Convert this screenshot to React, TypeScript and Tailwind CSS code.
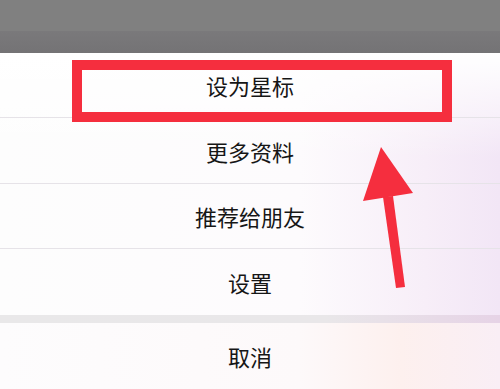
import React from "react";

const font = { fontFamily: '"Noto Sans CJK SC", "Noto Sans", sans-serif' };

function Row({ label, children, last, h }: { label: string; children?: React.ReactNode; last?: boolean; h: string }) {
  return (
    <div className={`relative flex ${h} items-center justify-center ${last ? "" : "border-b border-[#e6e3e8]"}`}>
      <span className="text-[22px] leading-none text-[#161616]">{label}</span>
      {children}
    </div>
  );
}

export default function App() {
  return (
    <div className="relative h-[389px] w-[500px] overflow-hidden bg-white" style={font}>
      <div className="flex h-[53px] flex-col">
        <div className="h-[31px] bg-[#808080]" />
        <div className="h-[22px] bg-gradient-to-b from-[#7a797b] to-[#747375]" />
      </div>
      <div className="relative bg-[linear-gradient(180deg,#ffffff_0%,rgba(255,255,255,0)_40%),linear-gradient(90deg,#fdfdfd_0%,#fdfbfd_60%,#f7eef8_85%,#f2e6f6_100%)]">
        <Row label="设为星标" h="h-[65px]">
          <div className="absolute left-[72px] top-[7px] h-[62px] w-[380px] border-[10px] border-[#f52e3e]" />
        </Row>
        <Row label="更多资料" h="h-[66px]" />
        <Row label="推荐给朋友" h="h-[65px]" />
        <Row label="设置" h="h-[66px]" last />
      </div>
      <div className="h-[8px] bg-[linear-gradient(90deg,#e9e8e9_0%,#e9e7e9_65%,#e6d3e6_100%)]" />
      <div className="flex h-[66px] items-center justify-center bg-[linear-gradient(90deg,#fdfcfd_0%,#fdf9fa_60%,#fdf0ee_80%,#f9eef5_100%)]">
        <span className="text-[22px] leading-none text-[#161616]">取消</span>
      </div>
      <svg className="pointer-events-none absolute left-0 top-0" width="500" height="389" viewBox="0 0 500 389">
        <polygon points="381,147 363,201 413,193" fill="#f52e3e" />
        <polygon points="383,197 393,196 405,287 396,288" fill="#f52e3e" />
      </svg>
    </div>
  );
}
